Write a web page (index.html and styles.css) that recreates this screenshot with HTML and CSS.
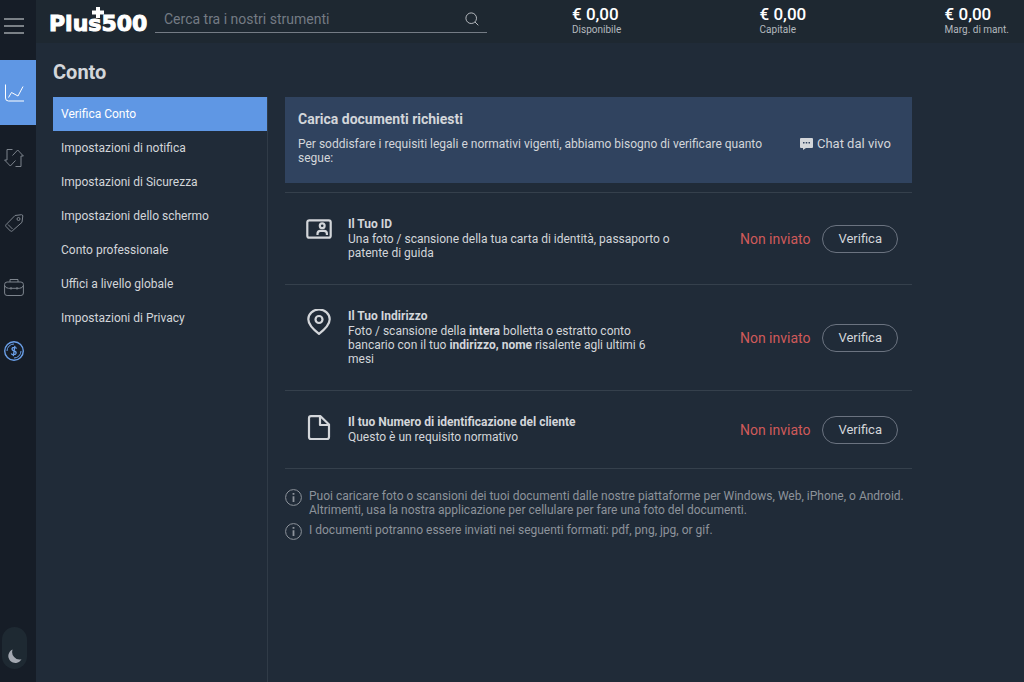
FILE: index.html
```html
<!DOCTYPE html>
<html lang="it">
<head>
<meta charset="utf-8">
<meta name="viewport" content="width=device-width, initial-scale=1">
<title>Plus500 - Conto</title>
<link rel="stylesheet" href="styles.css">
</head>
<body>
<div class="app">
  <nav class="rail" aria-label="Principale">
    <button class="rail-menu" aria-label="Menu">
      <svg class="rail-icon" viewBox="0 0 20 20"><path d="M0 3h20M0 10h20M0 17h20" stroke-width="1.4"/></svg>
    </button>
    <a class="rail-link is-active" href="#" aria-label="Strumenti">
      <svg class="rail-icon" viewBox="0 0 20 20"><path d="M1.500 1.500v13.500q0 3 3 3H20" /><path d="M4.500 14.500l3-5 6.500 3.500 5-9.500"/></svg>
    </a>
    <a class="rail-link" href="#" aria-label="Posizioni">
      <svg class="rail-icon" viewBox="0 0 20 20"><path d="M8.500 1.500H3V12H.6l5.700 6 5.200-5.500M11.500 18.500H17V8h2.400l-5.700-6-5.200 5.500"/></svg>
    </a>
    <a class="rail-link" href="#" aria-label="Ordini">
      <svg class="rail-icon" viewBox="0 0 20 20"><path d="M11 2.500l6.500-.800q1.300 0 1.300 1.300l-.800 6.300L8.200 18q-.9.700-1.800 0L2 13.500q-.7-.9 0-1.800zM4 11.500l4.500 4.500"/><circle cx="14.500" cy="6" r="1.500"/></svg>
    </a>
    <a class="rail-link" href="#" aria-label="Posizioni chiuse">
      <svg class="rail-icon" viewBox="0 0 20 20"><rect x=".6" y="4" width="18.800" height="13.500" rx="2.500"/><path d="M6 4V1.500h8V4M.6 7.500q1 2.800 4 2.800h10.800q3 0 4-2.800M7 9v2.600M13 9v2.600"/></svg>
    </a>
    <a class="rail-link is-funds" href="#" aria-label="Gestione fondi">
      <svg class="rail-icon" viewBox="0 0 20 20"><circle cx="10" cy="10" r="9.300" stroke-width="1.400"/><path d="M3 10a7 7 0 0 1 7-7M17 10a7 7 0 0 1-7 7"/><path d="M12.700 7.500Q12 6.300 10.300 6.300 8 6.300 8 8.100q0 1.300 2 1.900 2.300.6 2.100 2.200-.3 1.600-2.500 1.500-1.800-.1-2.300-1.300M10.900 4.800L9.300 15.200" stroke-width="1.300"/></svg>
    </a>
    <button class="theme" aria-label="Tema scuro">
      <svg class="theme-moon" viewBox="0 0 16 16"><path d="M6 .5A7.500 7.500 0 1 0 15.500 11 8 8 0 0 1 6 .5z"/></svg>
    </button>
  </nav>

  <div class="page">
    <header class="top">
      <a class="logo" href="#">Plus500
        <svg class="logo-plus" viewBox="0 0 12 11"><path d="M4 0h4v3.500h4v4H8V11H4V7.500H0v-4h4z"/></svg>
      </a>
      <label class="search">
        <input class="search-input" type="text" placeholder="Cerca tra i nostri strumenti" aria-label="Cerca tra i nostri strumenti">
        <svg class="search-icon" viewBox="0 0 14 14"><circle cx="6.200" cy="6.200" r="5.300"/><path d="M10 10l3.300 3.300"/></svg>
      </label>
      <dl class="stats">
        <div class="stat"><dd class="stat-value">€ 0,00</dd><dt class="stat-label">Disponibile</dt></div>
        <div class="stat"><dd class="stat-value">€ 0,00</dd><dt class="stat-label">Capitale</dt></div>
        <div class="stat"><dd class="stat-value">€ 0,00</dd><dt class="stat-label">Marg. di mant.</dt></div>
      </dl>
    </header>

    <h1 class="title">Conto</h1>

    <div class="columns">
      <nav class="menu" aria-label="Conto">
        <a class="menu-link is-active" href="#">Verifica Conto</a>
        <a class="menu-link" href="#">Impostazioni di notifica</a>
        <a class="menu-link" href="#">Impostazioni di Sicurezza</a>
        <a class="menu-link" href="#">Impostazioni dello schermo</a>
        <a class="menu-link" href="#">Conto professionale</a>
        <a class="menu-link" href="#">Uffici a livello globale</a>
        <a class="menu-link" href="#">Impostazioni di Privacy</a>
      </nav>

      <main class="content">
        <section class="banner">
          <h2 class="banner-title">Carica documenti richiesti</h2>
          <div class="banner-row">
            <p class="banner-text">Per soddisfare i requisiti legali e normativi vigenti, abbiamo bisogno di verificare quanto segue:</p>
            <a class="chat" href="#">
              <svg class="chat-icon" viewBox="0 0 13 12"><path class="chat-bubble" d="M1 0h11q1 0 1 1v8q0 1-1 1H6l-3 2V10H1Q0 10 0 9V1q0-1 1-1z"/><path class="chat-dots" d="M3 4h1.500v1.500H3zM5.750 4h1.500v1.500h-1.500zM8.500 4H10v1.500H8.500z"/></svg>
              Chat dal vivo
            </a>
          </div>
        </section>

        <ul class="docs">
          <li class="doc">
            <svg class="doc-icon" viewBox="0 0 26 26"><rect x="1.300" y="3.300" width="23.400" height="17.400" rx="2"/><circle cx="16.200" cy="8.800" r="2.400"/><path d="M11.500 18v-1.200q0-3 3-3h3.400q3 0 3 3V18"/></svg>
            <div class="doc-body">
              <h3 class="doc-title">Il Tuo ID</h3>
              <p class="doc-text">Una foto / scansione della tua carta di identità, passaporto o patente di guida</p>
            </div>
            <span class="status">Non inviato</span>
            <button class="verify">Verifica</button>
          </li>
          <li class="doc">
            <svg class="doc-icon" viewBox="0 0 26 26"><path d="M13 24.800Q2.300 16.500 2.300 10.200a10.700 9.700 0 0 1 21.400 0Q23.700 16.500 13 24.800z"/><circle cx="13" cy="10.500" r="3.500"/></svg>
            <div class="doc-body">
              <h3 class="doc-title">Il Tuo Indirizzo</h3>
              <p class="doc-text">Foto / scansione della <b>intera</b> bolletta o estratto conto bancario con il tuo <b>indirizzo, nome</b> risalente agli ultimi 6 mesi</p>
            </div>
            <span class="status">Non inviato</span>
            <button class="verify">Verifica</button>
          </li>
          <li class="doc">
            <svg class="doc-icon" viewBox="0 0 26 26"><path d="M5 1.200h9.500l8.500 8.300V22q0 2-2 2H5q-2 0-2-2V3.200q0-2 2-2zM14 1.500V10h8.800"/></svg>
            <div class="doc-body">
              <h3 class="doc-title">Il tuo Numero di identificazione del cliente</h3>
              <p class="doc-text">Questo è un requisito normativo</p>
            </div>
            <span class="status">Non inviato</span>
            <button class="verify">Verifica</button>
          </li>
        </ul>

        <ul class="notes">
          <li class="note">
            <svg class="note-icon" viewBox="0 0 17 17"><circle cx="8.500" cy="8.500" r="7.900"/><path d="M8.500 7.200V13M8.500 4v1.800" stroke-width="1.800"/></svg>
            <p class="note-text">Puoi caricare foto o scansioni dei tuoi documenti dalle nostre piattaforme per Windows, Web, iPhone, o Android. Altrimenti, usa la nostra applicazione per cellulare per fare una foto del documenti.</p>
          </li>
          <li class="note">
            <svg class="note-icon" viewBox="0 0 17 17"><circle cx="8.500" cy="8.500" r="7.900"/><path d="M8.500 7.200V13M8.500 4v1.800" stroke-width="1.800"/></svg>
            <p class="note-text">I documenti potranno essere inviati nei seguenti formati: pdf, png, jpg, or gif.</p>
          </li>
        </ul>
      </main>
    </div>
  </div>
</div>
</body>
</html>
```
FILE: styles.css
```css
* { box-sizing: border-box; margin: 0; padding: 0; }

body {
  background: #202b38;
  color: #d3d6da;
  font: 12px/14px Roboto, "Liberation Sans", sans-serif;
}

a { color: inherit; text-decoration: none; }
ul { list-style: none; }
button { background: none; border: 0; color: inherit; font: inherit; cursor: pointer; }
svg { fill: none; stroke: currentColor; flex: none; }

.app { display: flex; min-height: 100vh; }

/* icon rail */
.rail {
  display: flex;
  flex-direction: column;
  flex: none;
  width: 36px;
  background: #161d27;
  color: #7d848d;
}
.rail-menu, .rail-link {
  display: flex;
  align-items: center;
  height: 65px;
  padding-left: 4px;
}
.rail-menu { height: 60px; padding-bottom: 8px; color: #9da2a8; }
.rail-link.is-active { background: #5f97e4; color: #fff; }
.rail-link.is-funds { height: 62px; color: #6a9fe8; }
.rail-icon { width: 20px; height: 20px; }
.theme {
  display: flex;
  align-items: flex-end;
  justify-content: center;
  width: 25px;
  height: 42px;
  margin: auto 0 13px 2px;
  padding-bottom: 5px;
  border-radius: 13px;
  background: #1e2932;
  color: #a3a8b1;
}
.theme-moon { width: 15px; height: 15px; fill: currentColor; stroke: none; }

/* header */
.page { display: flex; flex: 1; flex-direction: column; min-width: 0; }
.top {
  display: flex;
  align-items: flex-start;
  height: 43px;
  padding: 0 15px 0 13px;
  background: #1e2831;
}
.logo {
  position: relative;
  width: 106px;
  padding-top: 11px;
  color: #fff;
  font: bold 22px/26px "DejaVu Sans", sans-serif;
  -webkit-text-stroke: 1px #fff;
}
.logo-plus { position: absolute; left: 43px; top: 7px; width: 12px; height: 11px; fill: #fff; stroke: none; }
.search {
  display: flex;
  align-items: center;
  flex: 0 1 332px;
  height: 33px;
  padding: 5px 8px 0 9px;
  border-bottom: 1px solid #757c85;
}
.search-input {
  flex: 1;
  min-width: 0;
  border: 0;
  outline: 0;
  background: none;
  color: #d3d6da;
  font: 14px/20px Roboto, "Liberation Sans", sans-serif;
}
.search-input::placeholder { color: #747b84; }
.search-icon { width: 14px; height: 14px; color: #b4b8bd; }
.stats { display: flex; flex: 1; justify-content: space-between; margin-left: 85px; padding-top: 4px; }
.stat-value { color: #fff; font-size: 17px; font-weight: 500; line-height: 20px; }
.stat-label { color: #b4b9bf; font-size: 10px; line-height: 12px; }

/* account page */
.title { padding: 17px 17px 13px; font-size: 20px; line-height: 24px; }
.columns { display: flex; flex: 1; }
.menu { flex: none; width: 232px; padding-left: 17px; border-right: 1px solid #303b47; }
.menu-link { display: block; padding-left: 8px; line-height: 34px; }
.menu-link.is-active { background: #5f97e4; color: #fff; }
.content { flex: 0 1 627px; margin: 0 17px; }

.banner { padding: 14px 21px 18px 13px; background: #30435f; }
.banner-title { margin-bottom: 10px; font-size: 14px; line-height: 16px; }
.banner-row { display: flex; justify-content: space-between; align-items: flex-start; }
.banner-text { max-width: 470px; }
.chat { display: flex; align-items: center; gap: 4px; font-size: 13px; white-space: nowrap; }
.chat-icon { width: 13px; height: 12px; stroke: none; }
.chat-bubble { fill: #d3d6da; }
.chat-dots { fill: #30435f; }

.docs { margin-top: 9px; border-top: 1px solid #35404c; }
.doc {
  display: flex;
  align-items: center;
  padding: 24px 14px 24px 21px;
  border-bottom: 1px solid #35404c;
}
.doc-icon { align-self: flex-start; width: 26px; height: 26px; margin-right: 16px; stroke-width: 2.2; stroke-linejoin: round; }
.doc-body { flex: 0 1 322px; margin-right: auto; }
.doc-title { font-size: 12px; line-height: 15px; }
.status { color: #cf5a5a; font-size: 14px; white-space: nowrap; }
.verify {
  height: 28px;
  margin-left: 12px;
  padding: 0 15px;
  border: 1px solid #6b7380;
  border-radius: 14px;
  font-size: 13px;
}

.notes { display: grid; gap: 6px; margin-top: 20px; color: #8d939b; }
.note { display: flex; align-items: flex-start; gap: 7px; }
.note-icon { width: 17px; height: 17px; }
```
